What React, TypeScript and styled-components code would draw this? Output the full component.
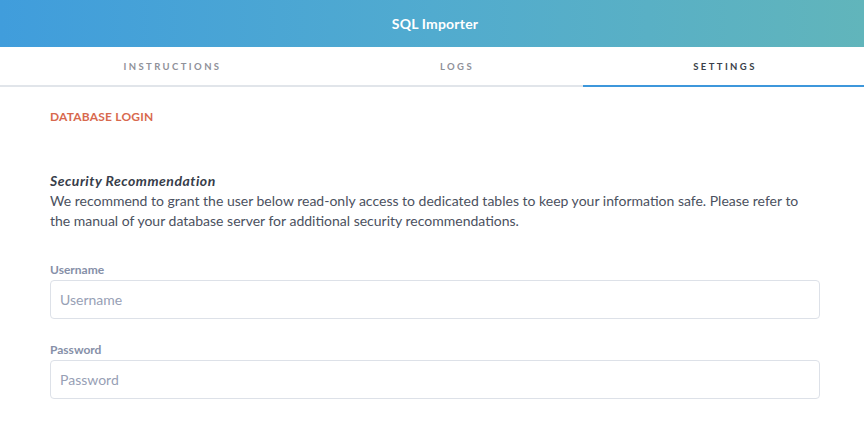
import React from "react";
import styled, { createGlobalStyle } from "styled-components";

const Global = createGlobalStyle`
  html, body { margin: 0; padding: 0; background: #fff; }
  body { font-family: Lato, "Open Sans", Arial, sans-serif; -webkit-font-smoothing: antialiased; }
  * { box-sizing: border-box; }
`;

const Page = styled.div`
  width: 864px;
  height: 433px;
  overflow: hidden;
  background: #fff;
`;

const Header = styled.header`
  height: 47px;
  display: flex;
  align-items: center;
  justify-content: center;
  padding-left: 6px;
  background: linear-gradient(90deg, #409ddc 0%, #51abcf 50%, #61b5bb 100%);
  color: #fff;
  font-size: 14px;
  font-weight: 700;
  letter-spacing: 0.2px;
`;

const Tabs = styled.nav`
  display: grid;
  grid-template-columns: 342px 241px 1fr;
  height: 40px;
`;

const Tab = styled.div<{ $active?: boolean; $shift?: number }>`
  display: flex;
  align-items: center;
  justify-content: center;
  padding-left: 3px;
  padding-right: ${(p) => p.$shift ?? 0}px;
  font-size: 9.5px;
  font-weight: 700;
  letter-spacing: 2.4px;
  text-transform: uppercase;
  color: ${(p) => (p.$active ? "#3b3f4a" : "#8f9199")};
  border-bottom: 2px solid ${(p) => (p.$active ? "#3d97db" : "#e1e5ea")};
`;

const Content = styled.main`
  padding: 0 44px 0 50px;
`;

const SectionTitle = styled.h2`
  margin: 0;
  padding-top: 22px;
  height: 84px;
  font-size: 12px;
  font-weight: 700;
  color: #d8694e;
  letter-spacing: 0.2px;
  text-transform: uppercase;
`;

const NoticeTitle = styled.div`
  font-size: 14px;
  line-height: 20px;
  font-weight: 700;
  font-style: italic;
  letter-spacing: 0.5px;
  color: #373d4a;
`;

const NoticeText = styled.p`
  margin: 0;
  font-size: 14px;
  line-height: 20px;
  color: #4b5160;
`;

const Field = styled.div<{ $top: number }>`
  display: flex;
  flex-direction: column;
  margin-top: ${(p) => p.$top}px;
`;

const Label = styled.label`
  font-size: 12px;
  line-height: 14px;
  font-weight: 700;
  color: #8690a8;
  margin-bottom: 3px;
`;

const Input = styled.input`
  height: 39px;
  width: 100%;
  border: 1px solid #dde1e8;
  border-radius: 4px;
  padding: 0 9px;
  font-family: inherit;
  font-size: 14px;
  color: #3b3f4a;
  outline: none;
  &::placeholder { color: #97a0b5; }
`;

export default function App() {
  return (
    <Page>
      <Global />
      <Header>SQL Importer</Header>
      <Tabs>
        <Tab>Instructions</Tab>
        <Tab $shift={14}>Logs</Tab>
        <Tab $active>Settings</Tab>
      </Tabs>
      <Content>
        <SectionTitle>Database Login</SectionTitle>
        <NoticeTitle>Security Recommendation</NoticeTitle>
        <NoticeText>
          We recommend to grant the user below read-only access to dedicated tables to keep your information safe. Please refer to the manual of your database server for additional security recommendations.
        </NoticeText>
        <Field $top={32}>
          <Label>Username</Label>
          <Input placeholder="Username" />
        </Field>
        <Field $top={24}>
          <Label>Password</Label>
          <Input type="password" placeholder="Password" />
        </Field>
      </Content>
    </Page>
  );
}
